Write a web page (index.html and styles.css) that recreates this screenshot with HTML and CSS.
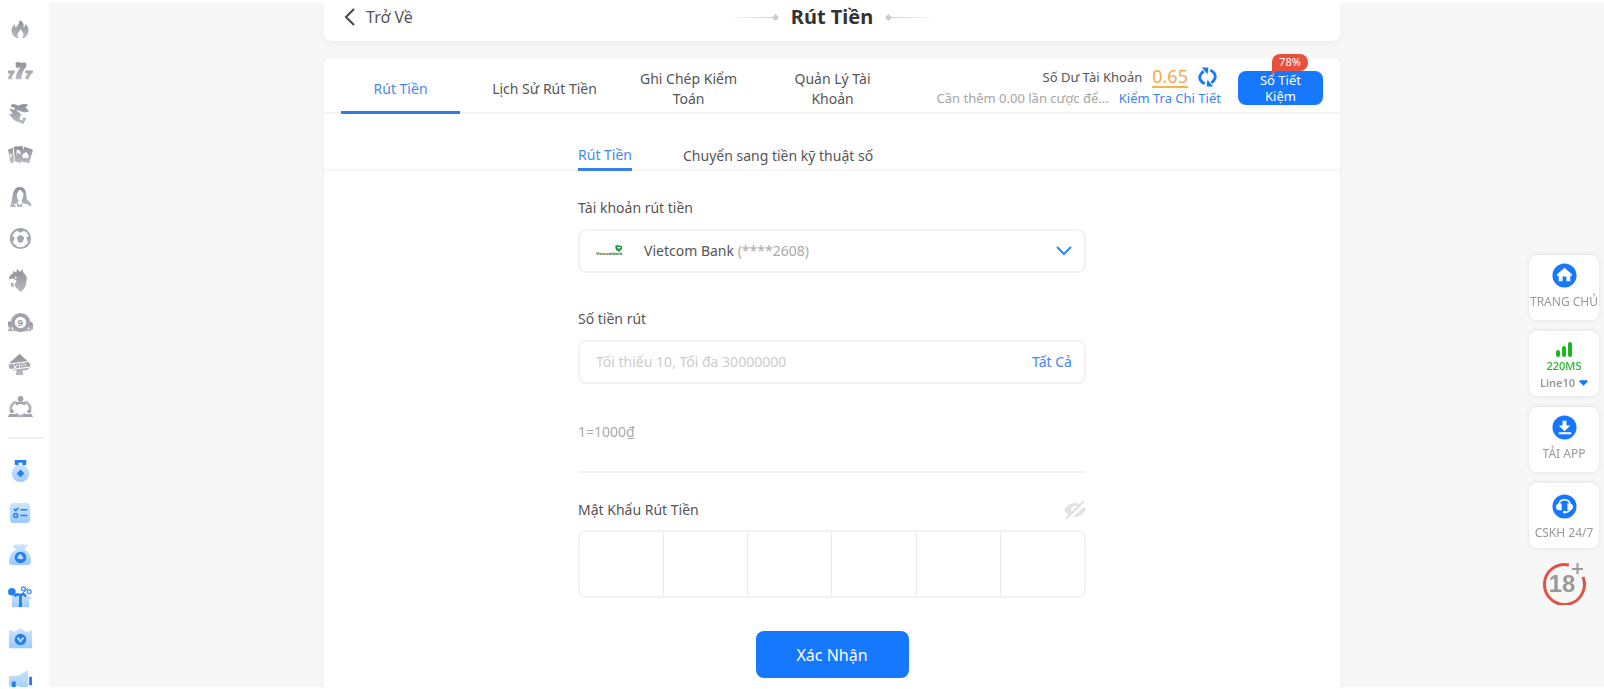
FILE: index.html
```html
<!DOCTYPE html>
<html lang="vi">
<head>
<meta charset="utf-8">
<title>Rút Tiền</title>
<link rel="stylesheet" href="styles.css">
</head>
<body>
<div class="page">
  <nav class="sidebar" aria-label="Danh mục">
    <a href="#" class="side-link" aria-label="Nổi bật"><svg viewBox="0 0 26 26"><path fill="url(#grey)" d="M12 3c4 2 5 5 4 8 1 0 2-2 2-4 3 3 4 6 3 9-1 4-4 6-6 6 2-4 1-6-2-9-3 4-4 6-2 9-3 0-6-2-7-6-1-4 1-6 3-9 0 2 0 3 1 4 2-2 4-4 4-8z"/></svg></a>
    <a href="#" class="side-link" aria-label="Nổ hũ"><svg viewBox="0 0 26 26"><path fill="url(#grey)" d="M8 4q3-2 5 0h6v4q-5 5-5 13H8q0-7 5-12H8zM0 12h7v2q-3 3-3 7H0q0-4 3-6H0zM18 12h8v2q-4 3-4 7h-4q0-4 3-6h-3z"/></svg></a>
    <a href="#" class="side-link" aria-label="Bắn cá"><svg viewBox="0 0 26 26"><path fill="url(#grey)" d="M4 3q4 0 7 2 4-3 10-1l-3 3q3 1 4 4l-5 1-9-3 6 5q-3 3-1 6l3-1-1-2 4 1-3 6-3-1-1-1q-6-1-8-5l-3-3 4-1-4-5 6 1V7L3 6z"/></svg></a>
    <a href="#" class="side-link" aria-label="Game bài"><svg viewBox="0 0 26 26"><path fill="url(#grey)" d="m0 7 5-2 1 15-3 1zM6 4l9-1 1 4-3 14-6-2zM17 4l9 3-4 14-9-2z"/><path fill="#fff" d="m19 9 3 5-2 2-5-1v-3zM3 10l1 3-1 3-1-3zm6-3q5 0 4 5l-3-2-1 4z"/></svg></a>
    <a href="#" class="side-link" aria-label="Casino"><svg viewBox="0 0 26 26"><path fill="url(#grey)" d="M12 2c6 0 7 5 7 9 0 5 2 5 5 8v4l-4-3-5-1-1-3c4-6 2-9-2-11-3 3-4 7-1 11l-1 3-4 1 3 3H2c2-5 2-8 3-13 1-5 3-8 7-8z"/><path fill="url(#grey)" d="m9 19 3 2 3-2-1 4h-4z"/></svg></a>
    <a href="#" class="side-link" aria-label="Thể thao"><svg viewBox="0 0 26 26"><circle cx="13" cy="12" r="10" fill="none" stroke="#a3a6af" stroke-width="2"/><path fill="#a3a6af" d="m13 8 4 3-2 5h-4l-2-5zM8 3h10l-5 3zM3 9l4 2-2 6zm20 0-4 2 2 6zM7 18l4 4-6-2zm12 0-4 4 6-2z"/></svg></a>
    <a href="#" class="side-link" aria-label="Đá gà"><svg viewBox="0 0 26 26"><path fill="url(#grey)" d="M6 6 5 2l4 2V0l4 3 2-3 1 4q5 4 3 9 0 7-6 11l-5-5-1-3 2-4-4-2-4 1q0-5 5-7zM3 14l3 1v4l-3-1z"/><circle cx="8" cy="9" r="1" fill="#fff"/></svg></a>
    <a href="#" class="side-link" aria-label="Xổ số"><svg viewBox="0 0 26 26"><path fill="url(#grey)" d="M4 11v10H0v-2l2-1-2-2v-5zM22 10l4 3v6l-4 2zM3 19h20v2H3z"/><circle cx="13" cy="12" r="8" fill="#fff" stroke="#a0a3ac" stroke-width="4"/><text class="ball-number" x="10" y="16">9</text></svg></a>
    <a href="#" class="side-link" aria-label="Poker"><svg viewBox="0 0 26 26"><path fill="url(#grey)" d="m12 1 8 7q4 3 3 7-3 4-8 3l1 5H8l1-5q-6 1-8-3-1-4 3-7z"/><path fill="#fff" d="m1 11 23-3v1L1 12zm0 6 23-3v1L1 18z"/><path fill="none" stroke="#fff" d="m6 12 2 4m2-4-4 4m6-5v4m4-4-2 3m3-3 2 3"/></svg></a>
    <a href="#" class="side-link" aria-label="Đại lý"><svg viewBox="0 0 26 26"><path fill="none" stroke="#b4b6bd" stroke-width="3" d="M8 7q-6 3-5 9m15-9q6 3 5 9M9 21q4 2 8 0"/><circle cx="13" cy="4" r="3" fill="#a0a3ac"/><path fill="#a0a3ac" d="M8 11V7h10v4l-5-2z"/><circle cx="4" cy="17" r="2" fill="#a0a3ac"/><circle cx="22" cy="17" r="2" fill="#a0a3ac"/><path fill="#a0a3ac" d="M0 23q1-5 6-3l4-1v4zM26 23q-1-5-6-3l-4-1v4z"/></svg></a>
    <hr class="side-rule">
    <a href="#" class="side-link" aria-label="Nhiệm vụ"><svg viewBox="0 0 26 26"><path fill="#267ff0" d="M7 1h12v5l-4 1V4h-4v3L7 6z"/><circle cx="13" cy="15" r="9" fill="url(#sky)"/><path fill="#267ff0" d="m13 11 4 4-4 4-4-4z"/></svg></a>
    <a href="#" class="side-link" aria-label="Danh sách"><svg viewBox="0 0 26 26"><rect x="2" y="2" width="21" height="21" rx="4" fill="url(#sky)"/><path fill="none" stroke="#267ff0" stroke-width="1.500" d="m6 8 2 2 3-3m2 2h7M13 15h7"/><circle cx="8" cy="15" r="2" fill="none" stroke="#267ff0" stroke-width="1.500"/></svg></a>
    <a href="#" class="side-link" aria-label="Hoàn trả"><svg viewBox="0 0 26 26"><path fill="url(#sky)" d="M6 2q3-1 6 0 3-2 5 0 4-1 3 1l-3 4q7 3 7 12 0 4-4 4H5q-4 0-4-4Q2 9 9 7L5 4z"/><circle cx="13" cy="15" r="6" fill="#267ff0"/><path fill="#b6d9ff" d="m13 11 3 4q0 2-2 2h-2q-3-1-2-3z"/></svg></a>
    <a href="#" class="side-link" aria-label="Quà tặng"><svg viewBox="0 0 26 26"><path fill="url(#sky)" d="M4 11h18v12H4z"/><circle cx="4" cy="7" r="4" fill="#267ff0"/><path fill="none" stroke="#267ff0" stroke-width="3" d="M13 23V11q-4-3-6 1m6 0q2-5 6 0"/><circle cx="16" cy="4" r="2" fill="none" stroke="#4b99f5" stroke-width="1.500"/><circle cx="22" cy="7" r="2" fill="none" stroke="#4b99f5" stroke-width="1.500"/><path stroke="#267ff0" d="m15 9 6-6"/><path fill="#b6d9ff" d="m18 10 7 4-4 1z"/></svg></a>
    <a href="#" class="side-link" aria-label="VIP"><svg viewBox="0 0 26 26"><path fill="url(#sky)" d="m1 3 6 2 6-4 6 4 6-2v19H1z"/><circle cx="13" cy="13" r="6" fill="#267ff0"/><path fill="none" stroke="#b6d9ff" stroke-width="2" d="m10 11 3 4 3-4"/></svg></a>
    <a href="#" class="side-link" aria-label="Thông báo"><svg viewBox="0 0 26 26"><path fill="url(#sky)" d="M1 9q0-2 2-2h7l11-6v21l-10-4H1z"/><path fill="#267ff0" d="M22 8h3v9h-3zM4 13h4v10H4z"/></svg></a>
  </nav>

  <main class="main">
    <div class="content">
    <header class="topbar">
      <a href="#" class="back"><svg class="back-icon" viewBox="0 0 12 18"><path d="M10 1 2 9l8 8" fill="none" stroke="#444" stroke-width="2"/></svg>Trở Về</a>
      <h1 class="title"><span class="ornament"></span>Rút Tiền<span class="ornament ornament-right"></span></h1>
    </header>

    <section class="card">
      <div class="card-head">
        <div class="tabs">
          <button class="tab tab-active">Rút Tiền</button>
          <button class="tab">Lịch Sử Rút Tiền</button>
          <button class="tab">Ghi Chép Kiểm Toán</button>
          <button class="tab">Quản Lý Tài Khoản</button>
        </div>
        <div class="balance">
          <div class="balance-row">Số Dư Tài Khoản <a href="#" class="amount">0.65</a>
            <button class="refresh" aria-label="Làm mới"><svg viewBox="0 0 20 20"><path fill="none" stroke="#1677ff" stroke-width="3" d="M7 17Q1 14 2 9q1-3 4-5M13 3q6 3 5 8-1 3-4 5"/><path fill="#1677ff" d="M4 0h7l-1 7zM16 20H9l1-7z"/></svg></button>
          </div>
          <div class="wager-row"><span class="wager">Cần thêm 0.00 lần cược để...</span><a href="#" class="link">Kiểm Tra Chi Tiết</a></div>
        </div>
        <button class="savings">Sổ Tiết Kiệm<span class="badge">78%</span></button>
      </div>

      <div class="subtabs">
        <button class="subtab subtab-active">Rút Tiền</button>
        <button class="subtab">Chuyển sang tiền kỹ thuật số</button>
      </div>

      <form class="form">
        <label class="label" for="account">Tài khoản rút tiền</label>
        <button type="button" class="field account" id="account">
          <svg class="bank-logo" viewBox="0 0 28 14"><path fill="#2c9a45" d="m19 2 2-1 5 1v3l-3 3-3-2z"/><path fill="#fff" d="m21 3 2 2 2-2z"/><text class="bank-name" x="0" y="11">Vietcombank</text></svg>
          <span>Vietcom Bank <span class="masked">(****2608)</span></span>
          <svg class="chevron" viewBox="0 0 16 10"><path d="m1 1 7 7 7-7" fill="none" stroke="#2f86f6" stroke-width="2"/></svg>
        </button>

        <label class="label" for="money">Số tiền rút</label>
        <div class="field money">
          <input class="money-input" id="money" type="text" placeholder="Tối thiểu 10, Tối đa 30000000">
          <button type="button" class="all">Tất Cả</button>
        </div>
        <p class="rate">1=1000₫</p>

        <div class="pin-head">
          <label for="pin1">Mật Khẩu Rút Tiền</label>
          <button type="button" class="eye" aria-label="Hiện mật khẩu"><svg viewBox="0 0 22 18"><path fill="#e1e1e1" fill-rule="evenodd" d="M0 9q5-7 11-7t11 7q-5 7-11 7T0 9m11-4a4 4 0 1 0 0 8 4 4 0 0 0 0-8"/><circle cx="11" cy="9" r="2" fill="#e1e1e1"/><path stroke="#fff" stroke-width="3" d="M4 18 22 2"/><path stroke="#e1e1e1" stroke-width="2" d="M2 18 20 0"/></svg></button>
        </div>
        <div class="pins">
          <input class="pin" id="pin1" type="password" maxlength="1">
          <input class="pin" type="password" maxlength="1" aria-label="Số 2">
          <input class="pin" type="password" maxlength="1" aria-label="Số 3">
          <input class="pin" type="password" maxlength="1" aria-label="Số 4">
          <input class="pin" type="password" maxlength="1" aria-label="Số 5">
          <input class="pin" type="password" maxlength="1" aria-label="Số 6">
        </div>
        <button type="button" class="submit">Xác Nhận</button>
      </form>
    </section>
    </div>
  </main>

  <aside class="dock">
    <a href="#" class="dock-item"><svg class="dock-icon" viewBox="0 0 26 26"><circle cx="13" cy="13" r="12.500" fill="#1677ff"/><path fill="#fff" d="m13 5 8 7-1 2-1-1v6h-4v-5h-4v5H7v-6l-1 1-1-2z"/></svg>TRANG CHỦ</a>
    <button class="dock-item dock-line"><svg class="signal" viewBox="0 0 18 16"><path fill="none" stroke="#19b81c" stroke-width="4" stroke-linecap="round" d="M3 11v3M9 7v7M15 3v11"/></svg><span class="ping">220MS</span><span class="line-name">Line10 <svg class="caret" viewBox="0 0 10 6"><path fill="#1677ff" d="M1 0h8l1 1-5 5-5-5z"/></svg></span></button>
    <a href="#" class="dock-item"><svg class="dock-icon" viewBox="0 0 26 26"><circle cx="13" cy="13" r="12.500" fill="#1677ff"/><path fill="#fff" d="M11 6h4v5h4l-6 6-6-6h4zM7 18h13v2H7z"/></svg>TẢI APP</a>
    <a href="#" class="dock-item dock-support"><svg class="dock-icon" viewBox="0 0 26 26"><circle cx="13" cy="13" r="12.500" fill="#1677ff"/><path fill="none" stroke="#fff" stroke-width="1.500" d="M7 11q1-5 6-5t6 5M19 16q-1 3-5 3"/><path fill="#fff" d="M7 10h3v7H7q-3-1-3-4 0-2 3-3zM19 10h-3v7h3q3-1 3-4 0-2-3-3z"/><circle cx="13" cy="19" r="1.500" fill="#fff"/></svg>CSKH 24/7</a>
    <svg class="adult" viewBox="0 0 44 46"><path fill="none" stroke="#e25244" stroke-width="3" d="M27 6A20 20 0 1 0 41 18"/><text class="adult-number" x="20" y="33">18</text><path fill="none" stroke="#999" stroke-width="2" d="M30 10h11M35.500 4v11"/></svg>
  </aside>
</div>
<svg class="defs" aria-hidden="true"><defs>
  <linearGradient id="grey" x1="0" y1="0" x2="0" y2="1"><stop offset="0" stop-color="#8d9099"/><stop offset="1" stop-color="#b9bbc2"/></linearGradient>
  <linearGradient id="sky" x1="0" y1="0" x2="0" y2="1"><stop offset="0" stop-color="#cde5ff"/><stop offset="1" stop-color="#9ccbff"/></linearGradient>
</defs></svg>
</body>
</html>
```
FILE: styles.css
```css
* { box-sizing: border-box; }
body {
  margin: 0;
  background: #f7f7f7;
  border: solid #fff;
  border-width: 3px 0 2px;
  color: #555;
  font: 14px/20px "Noto Sans", sans-serif;
  height: 100vh;
  overflow: hidden;
}
button, input { font: inherit; color: inherit; background: none; border: 0; padding: 0; }
button { cursor: pointer; }
a { color: inherit; text-decoration: none; }
svg { display: block; }
.defs { position: absolute; width: 0; height: 0; }
.page { display: flex; height: 100%; overflow: hidden; }

.sidebar { flex: 0 0 49px; padding: 14px 5px 0 8px; background: #fff; overflow: hidden; }
.side-link { display: block; width: 25px; height: 25px; margin-bottom: 17px; }
.side-link svg { width: 25px; height: 25px; }
.side-rule { margin: 0 0 20px; border: 0; height: 2px; background: #f1f1f1; }
.ball-number { font: bold 10px "Noto Sans", sans-serif; fill: #9b9ea7; }

.main { flex: 1; min-width: 0; padding-left: 11px; }
.content { display: flex; flex-direction: column; gap: 17px; width: 65.8%; height: 100%; margin: 0 auto; }
.topbar {
  display: flex; align-items: flex-start;
  height: 38px; padding: 4px 20px 0;
  background: #fff; border-radius: 0 0 8px 8px; box-shadow: 0 3px 8px rgba(0, 0, 0, .05);
}
.back { display: flex; align-items: center; gap: 10px; font-size: 16px; flex: 1; }
.back-icon { width: 12px; height: 18px; }
.title { display: flex; align-items: center; gap: 14px; margin: 0; font-size: 20px; line-height: 20px; color: #333; }
.topbar::after { content: ""; flex: 1; }
.ornament { position: relative; width: 50px; height: 1px; background: linear-gradient(to right, transparent, #ccc); }
.ornament::after { content: ""; position: absolute; right: -1px; top: -2px; width: 5px; height: 5px; background: #ccc; transform: rotate(45deg); }
.ornament-right { transform: scaleX(-1); }

.card { flex: 1; background: #fff; border-radius: 8px 8px 0 0; box-shadow: 0 0 8px rgba(0, 0, 0, .03); }
.card-head { display: flex; align-items: center; height: 56px; padding: 0 17px; border-bottom: 2px solid #f3f3f3; }
.tabs { display: flex; align-self: stretch; gap: 25px; }
.tab { width: 119px; height: 56px; padding: 5px 6px 0; }
.tab-active { padding-top: 8px; color: #4388f0; border-bottom: 3px solid #2f7ae5; }
.balance { margin: 4px 0 0 auto; text-align: right; font-size: 13px; white-space: nowrap; }
.balance-row { display: flex; justify-content: flex-end; align-items: center; gap: 10px; padding-right: 4px; }
.amount { color: #f6a94a; font-size: 18px; line-height: 20px; border-bottom: 2px solid #f3b34d; }
.refresh svg { width: 19px; height: 20px; }
.wager-row { display: flex; gap: 10px; }
.wager { color: #a5a5a5; }
.link { color: #3c83f0; }
.savings { position: relative; width: 85px; height: 34px; margin: 6px 0 0 17px; padding: 0 16px; background: #1677ff; color: #fff; border-radius: 8px; font-size: 13px; line-height: 16px; }
.badge { position: absolute; top: -17px; right: 15px; width: 36px; height: 17px; border-radius: 8px 8px 8px 0; background: #e6503f; font-size: 11px; }
.badge::after { content: ""; position: absolute; left: 0; top: 16px; border-top: 5px solid #e6503f; border-right: 5px solid transparent; }

.subtabs { display: flex; gap: 51px; height: 57px; padding-left: 25%; border-bottom: 2px solid #f5f5f5; }
.subtab { height: 57px; padding-top: 26px; }
.subtab-active { padding-top: 28px; color: #4388f0; border-bottom: 3px solid #3580ec; }

.form { display: flex; flex-direction: column; width: 50%; margin: 0 auto; padding-top: 27px; }
.label { display: block; margin-bottom: 11px; }
.field { display: flex; align-items: center; height: 44px; margin-bottom: 36px; padding: 0 12px 0 16px; border: 2px solid #f2f2f2; border-radius: 8px; }
.account { gap: 20px; text-align: left; }
.bank-logo { width: 28px; height: 14px; }
.bank-name { font: bold 4px "Noto Sans", sans-serif; fill: #17713a; }
.masked { color: #aaa; }
.chevron { width: 16px; height: 10px; margin-left: auto; }
.money-input { flex: 1; min-width: 0; outline: 0; }
.money-input::placeholder { color: #ccc; opacity: 1; }
.all { color: #4388f0; }
.rate { margin: 2px 0 29px; color: #aaa; }
.pin-head { display: flex; justify-content: space-between; align-items: center; padding-top: 27px; margin-bottom: 10px; border-top: 2px solid #f3f3f3; }
.eye svg { width: 22px; height: 18px; }
.pins { display: flex; height: 68px; border: 2px solid #f3f3f3; border-radius: 8px; overflow: hidden; }
.pin { flex: 1; min-width: 0; text-align: center; outline: 0; }
.pin + .pin { border-left: 1px solid #eaeaea; }
.submit { align-self: center; width: 153px; height: 47px; margin-top: 33px; background: #1677ff; color: #fff; border-radius: 8px; font-size: 16px; }

.dock { position: fixed; right: 5px; top: 255px; display: flex; flex-direction: column; align-items: center; gap: 11px; font-size: 12px; line-height: 16px; color: #999; }
.dock-item { display: flex; flex-direction: column; align-items: center; width: 70px; height: 65px; padding-top: 8px; gap: 6px; background: #fff; border-radius: 8px; box-shadow: 0 0 5px rgba(0, 0, 0, .1); white-space: nowrap; }
.dock-icon { width: 25px; height: 25px; }
.dock-line { padding-top: 10px; gap: 1px; }
.dock-support { padding-top: 11px; }
.signal { width: 18px; height: 16px; }
.ping { color: #23b827; font-size: 11px; font-weight: 500; }
.line-name { display: flex; align-items: center; gap: 4px; font-size: 11px; font-weight: 600; }
.caret { width: 9px; height: 6px; }
.adult { width: 44px; height: 46px; }
.adult-number { font: bold 24px "Liberation Sans", sans-serif; fill: #999; text-anchor: middle; }
```
